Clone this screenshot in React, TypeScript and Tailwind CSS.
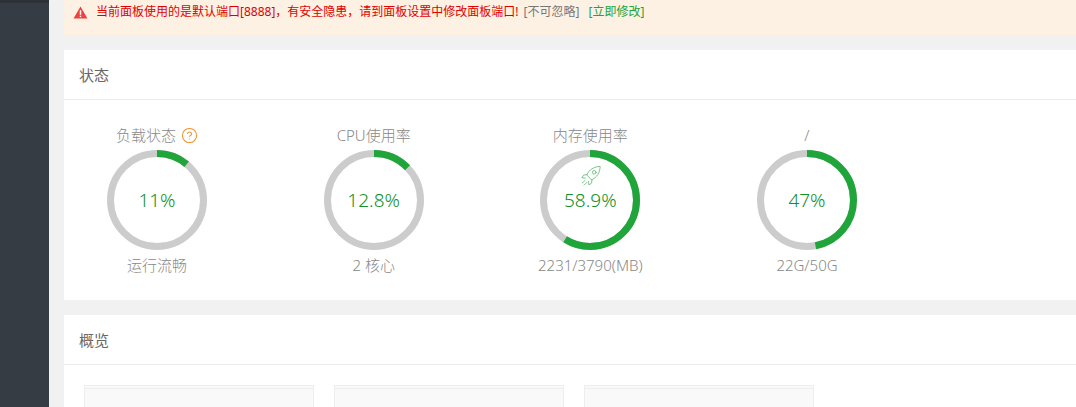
import { CircleHelp } from 'lucide-react';

const FONT = "font-['Noto_Sans','Noto_Sans_CJK_SC',sans-serif]";

interface GaugeProps {
  title: string;
  percent: number;
  label: string;
  value: string;
  help?: boolean;
  rocket?: boolean;
}

function Rocket() {
  return (
    <svg viewBox="0 0 24 24" className="absolute left-[40px] top-[15px] h-[22px] w-[22px]" fill="none" stroke="#6fbd83" strokeWidth="1" strokeLinecap="round" strokeLinejoin="round">
      <path d="M7.500 10.500C10 5 15 2 22 1.500c-.3 7-3.500 12-9 14.500z" />
      <circle cx="15.500" cy="8" r="2" />
      <path d="M7.500 10.500l-3.500.5-2 3 3.700.3" />
      <path d="M13 16l-.3 3.700-3 2-.4-3.700" />
      <path d="M5.500 17l-3 2.500M7.500 19l-3 3" />
    </svg>
  );
}

function Gauge({ title, percent, label, value, help, rocket }: GaugeProps) {
  const r = 46.5;
  const len = 2 * Math.PI * r;
  return (
    <div className="flex w-[100px] shrink-0 flex-col items-center whitespace-nowrap text-[15px] font-light leading-[20px] text-[#888]">
      <div className="flex h-[20px] items-center gap-[5px]">
        <span>{title}</span>
        {help && <CircleHelp className="h-[17px] w-[17px] text-[#f0932b]" strokeWidth={1.5} />}
      </div>
      <div className="relative mt-[5px] h-[100px] w-[100px]">
        <svg viewBox="0 0 100 100" className="h-[100px] w-[100px] -rotate-90">
          <circle cx="50" cy="50" r={r} fill="none" stroke="#cccccc" strokeWidth="7" />
          <circle cx="50" cy="50" r={r} fill="none" stroke="#20a53a" strokeWidth="7" strokeDasharray={`${(len * percent) / 100} ${len}`} />
        </svg>
        {rocket && <Rocket />}
        <div className="absolute inset-0 flex items-center justify-center text-[19px] font-light text-[#0f9128]">{value}</div>
      </div>
      <div className="mt-[5px]">{label}</div>
    </div>
  );
}

function OverviewBox() {
  return (
    <div className="h-[60px] w-[230px] border border-[#eeeeee] bg-[#f9f9f9] pt-[2px]">
      <div className="h-full border-t border-[#eeeeee]" />
    </div>
  );
}

export default function App() {
  return (
    <div className={`flex h-[407px] w-[1076px] overflow-hidden bg-[#f1f1f1] ${FONT}`}>
      <aside className="h-full w-[49px] shrink-0 border-t-[3px] border-[#2c3138] bg-[#353c44]" />
      <main className="min-w-0 flex-1 pl-[15px]">
        <div className="flex h-[35px] items-start gap-[8px] bg-[#fdf1e3] pl-[9px] pt-[3px] text-[12px] leading-[18px]">
          <svg viewBox="0 0 16 14" className="mt-[3px] h-[13px] w-[15px] shrink-0">
            <path d="M8 0.500L15.500 13.500H0.500z" fill="#ef3f3f" />
            <rect x="7.200" y="4.500" width="1.600" height="5" fill="#fff" />
            <rect x="7.200" y="10.500" width="1.600" height="1.600" fill="#fff" />
          </svg>
          <p className="whitespace-nowrap">
            <span className="text-[#e00000]">当前面板使用的是默认端口[8888]，有安全隐患，请到面板设置中修改面板端口!</span>
            <span className="ml-[5px] text-[#777]">[不可忽略]</span>
            <span className="ml-[9px] text-[#20a53a]">[立即修改]</span>
          </p>
        </div>

        <section className="mt-[15px] h-[250px] bg-white">
          <h2 className="flex h-[50px] items-center border-b border-[#ececec] pl-[15px] pt-[1px] text-[15px] font-normal text-[#666]">状态</h2>
          <div className="flex gap-[116.67px] pl-[43px] pt-[25px]">
            <Gauge title="负载状态" percent={11} value="11%" label="运行流畅" help />
            <Gauge title="CPU使用率" percent={12.8} value="12.8%" label="2 核心" />
            <Gauge title="内存使用率" percent={58.9} value="58.9%" label="2231/3790(MB)" rocket />
            <Gauge title="/" percent={47} value="47%" label="22G/50G" />
          </div>
        </section>

        <section className="mt-[15px] h-[120px] bg-white">
          <h2 className="flex h-[50px] items-center border-b border-[#ececec] pl-[15px] pt-[1px] text-[15px] font-normal text-[#666]">概览</h2>
          <div className="flex gap-[20px] pl-[20px] pt-[20px]">
            <OverviewBox />
            <OverviewBox />
            <OverviewBox />
          </div>
        </section>
      </main>
    </div>
  );
}
